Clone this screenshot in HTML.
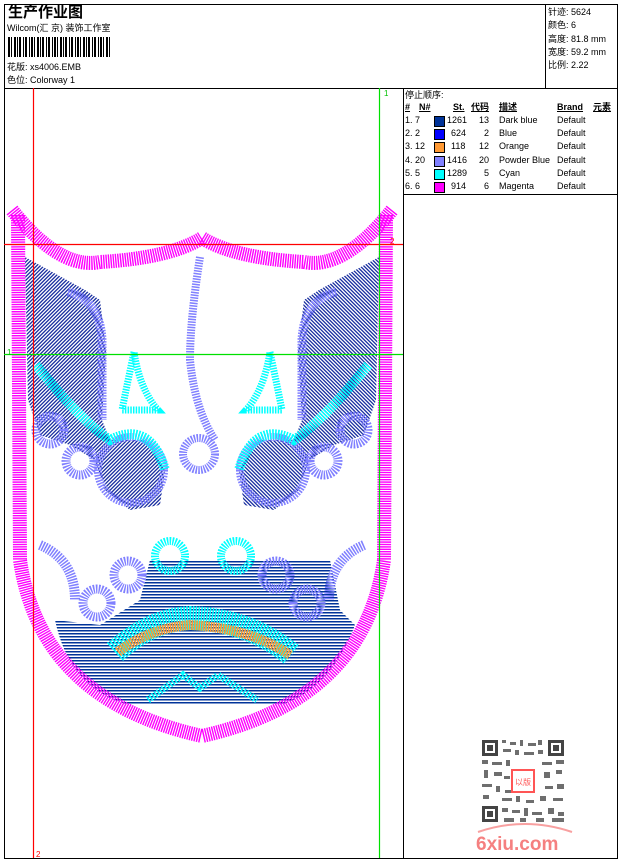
<!DOCTYPE html>
<html><head><meta charset="utf-8"><style>
body{margin:0;width:620px;height:860px;background:#fff;position:relative;overflow:hidden;font-family:"Liberation Sans","Noto Sans CJK SC",sans-serif;font-size:9px;color:#000}
.a{position:absolute;white-space:nowrap;line-height:11px}
</style></head><body>
<svg width="620" height="860" style="position:absolute;left:0;top:0">
<defs>
<pattern id="diag" width="2.6" height="2.6" patternUnits="userSpaceOnUse" patternTransform="rotate(45)"><rect width="1.3" height="2.6" fill="#1a2fa0"/></pattern>
<pattern id="hor" width="4" height="3" patternUnits="userSpaceOnUse"><rect width="4" height="1.5" fill="#003399"/></pattern>
</defs>
<rect x="4.5" y="4.5" width="613" height="854" fill="none" stroke="#000"/>
<line x1="4" y1="88.5" x2="618" y2="88.5" stroke="#000"/>
<line x1="545.5" y1="4" x2="545.5" y2="88" stroke="#000"/>
<line x1="403.5" y1="88" x2="403.5" y2="858" stroke="#000"/>
<line x1="403" y1="194.5" x2="618" y2="194.5" stroke="#000"/>
<g fill="#000">
<rect x="8" y="37" width="2" height="20"/><rect x="11" y="37" width="1" height="20"/><rect x="14" y="37" width="2" height="20"/><rect x="17" y="37" width="1" height="20"/><rect x="19" y="37" width="2" height="20"/><rect x="23" y="37" width="1" height="20"/><rect x="25" y="37" width="2" height="20"/><rect x="29" y="37" width="1" height="20"/><rect x="31" y="37" width="2" height="20"/><rect x="34" y="37" width="1" height="20"/><rect x="37" y="37" width="2" height="20"/><rect x="40" y="37" width="1" height="20"/><rect x="42" y="37" width="2" height="20"/><rect x="46" y="37" width="1" height="20"/><rect x="48" y="37" width="2" height="20"/><rect x="52" y="37" width="1" height="20"/><rect x="54" y="37" width="2" height="20"/><rect x="57" y="37" width="1" height="20"/><rect x="60" y="37" width="2" height="20"/><rect x="63" y="37" width="1" height="20"/><rect x="65" y="37" width="2" height="20"/><rect x="69" y="37" width="1" height="20"/><rect x="71" y="37" width="2" height="20"/><rect x="75" y="37" width="1" height="20"/><rect x="77" y="37" width="2" height="20"/><rect x="80" y="37" width="1" height="20"/><rect x="83" y="37" width="2" height="20"/><rect x="86" y="37" width="1" height="20"/><rect x="88" y="37" width="2" height="20"/><rect x="92" y="37" width="1" height="20"/><rect x="94" y="37" width="2" height="20"/><rect x="98" y="37" width="1" height="20"/><rect x="100" y="37" width="2" height="20"/><rect x="103" y="37" width="1" height="20"/><rect x="106" y="37" width="2" height="20"/><rect x="109" y="37" width="1" height="20"/>
</g>
<!-- mouth first -->
<path d="M150,560 L330,560 L340,610 L355,625 Q330,690 280,705 L130,705 Q70,690 55,620 L100,625 L140,600 Z" fill="url(#hor)"/>
<g id="half">
<path d="M25,257 L85,290 L100,300 L106,350 L102,420 L110,440 L150,440 L165,470 L160,505 L130,510 L105,490 L95,460 L70,445 L40,435 L28,400 Z" fill="url(#diag)"/>
<path d="M68,292 Q100,300 102,340 L102,420" fill="none" stroke="#8080ff" stroke-width="9" stroke-dasharray="1.5 1.2"/>
<circle cx="131" cy="470" r="33" fill="none" stroke="#8080ff" stroke-width="8" stroke-dasharray="1.5 1.2"/>
<circle cx="50" cy="430" r="14" fill="none" stroke="#8080ff" stroke-width="9" stroke-dasharray="1.5 1.2"/>
<circle cx="80" cy="461" r="14" fill="none" stroke="#8080ff" stroke-width="9" stroke-dasharray="1.5 1.2"/>
<path d="M36,365 Q80,420 110,440 Q150,420 165,470" fill="none" stroke="#00ffff" stroke-width="10" stroke-dasharray="1.5 1.2"/>
<path d="M134,352 Q126,390 122,410 L158,410 Q140,390 134,352Z" fill="none" stroke="#00ffff" stroke-width="7" stroke-dasharray="1.5 1.2"/>
<path d="M12,210 Q60,270 100,262 Q170,258 202,238" fill="none" stroke="#ff00ff" stroke-width="14" stroke-dasharray="1.4 1"/>
<path d="M18,215 L20,560 Q40,700 202,736" fill="none" stroke="#ff00ff" stroke-width="14" stroke-dasharray="1.4 1"/>
<path d="M40,545 Q75,560 75,600" fill="none" stroke="#8080ff" stroke-width="10" stroke-dasharray="1.5 1.2"/>
<circle cx="97" cy="603" r="14" fill="none" stroke="#8080ff" stroke-width="9" stroke-dasharray="1.5 1.2"/>
<circle cx="128" cy="575" r="14" fill="none" stroke="#8080ff" stroke-width="9" stroke-dasharray="1.5 1.2"/>
</g>
<use href="#half" transform="translate(404,0) scale(-1,1)"/>
<path d="M200,257 Q190,320 190,360 Q195,410 215,440" fill="none" stroke="#8080ff" stroke-width="8" stroke-dasharray="1.5 1.2"/>
<circle cx="199" cy="454" r="16" fill="none" stroke="#8080ff" stroke-width="8" stroke-dasharray="1.5 1.2"/>
<circle cx="170" cy="556" r="15" fill="none" stroke="#00ffff" stroke-width="8" stroke-dasharray="1.5 1.2"/>
<circle cx="236" cy="556" r="15" fill="none" stroke="#00ffff" stroke-width="8" stroke-dasharray="1.5 1.2"/>
<path d="M115,652 Q150,620 190,618 Q250,620 292,655" fill="none" stroke="#00ffff" stroke-width="24" stroke-dasharray="1.5 1.2"/>
<path d="M118,652 Q150,628 190,625 Q250,628 290,655" fill="none" stroke="#ff9933" stroke-width="10" stroke-dasharray="1.6 0.8"/>
<path d="M148,700 L183,675 L200,688 L218,675 L257,700" fill="none" stroke="#00ffff" stroke-width="7" stroke-dasharray="1.5 1.5"/>
<line x1="33.5" y1="88" x2="33.5" y2="858" stroke="#ff0000" stroke-width="1.2"/>
<line x1="4" y1="244.5" x2="403" y2="244.5" stroke="#ff0000" stroke-width="1.2"/>
<line x1="4" y1="354.5" x2="403" y2="354.5" stroke="#00e000" stroke-width="1.2"/>
<line x1="379.5" y1="88" x2="379.5" y2="858" stroke="#00e000" stroke-width="1.2"/>
<rect x="482" y="740" width="82" height="82" fill="#fff"/>
<g fill="#444">
<rect x="482" y="740" width="16" height="16"/><rect x="548" y="740" width="16" height="16"/><rect x="482" y="806" width="16" height="16"/>
</g>
<g fill="#fff"><rect x="485" y="743" width="10" height="10"/><rect x="551" y="743" width="10" height="10"/><rect x="485" y="809" width="10" height="10"/></g>
<g fill="#444"><rect x="487" y="745" width="6" height="6"/><rect x="553" y="745" width="6" height="6"/><rect x="487" y="811" width="6" height="6"/></g>
<g fill="#555" opacity="0.85">
<rect x="502" y="740" width="4" height="3"/><rect x="510" y="742" width="6" height="3"/><rect x="520" y="740" width="3" height="6"/><rect x="528" y="743" width="8" height="3"/><rect x="538" y="740" width="4" height="5"/>
<rect x="503" y="749" width="8" height="3"/><rect x="515" y="750" width="4" height="5"/><rect x="524" y="752" width="10" height="3"/><rect x="538" y="750" width="5" height="4"/>
<rect x="482" y="760" width="6" height="4"/><rect x="492" y="762" width="10" height="3"/><rect x="506" y="760" width="4" height="6"/><rect x="542" y="762" width="10" height="3"/><rect x="556" y="760" width="8" height="4"/>
<rect x="484" y="770" width="4" height="8"/><rect x="494" y="772" width="8" height="4"/><rect x="504" y="776" width="6" height="3"/><rect x="544" y="772" width="6" height="6"/><rect x="556" y="770" width="6" height="4"/>
<rect x="482" y="784" width="10" height="3"/><rect x="496" y="786" width="4" height="6"/><rect x="505" y="790" width="6" height="3"/><rect x="545" y="786" width="8" height="3"/><rect x="557" y="784" width="7" height="5"/>
<rect x="483" y="795" width="6" height="4"/><rect x="502" y="798" width="10" height="3"/><rect x="516" y="796" width="4" height="6"/><rect x="526" y="800" width="8" height="3"/><rect x="540" y="796" width="6" height="5"/><rect x="553" y="798" width="10" height="3"/>
<rect x="502" y="808" width="6" height="4"/><rect x="512" y="810" width="8" height="3"/><rect x="524" y="808" width="4" height="8"/><rect x="532" y="812" width="10" height="3"/><rect x="548" y="808" width="6" height="6"/><rect x="558" y="812" width="6" height="4"/>
<rect x="504" y="818" width="10" height="4"/><rect x="520" y="818" width="6" height="4"/><rect x="536" y="818" width="8" height="4"/><rect x="552" y="818" width="12" height="4"/>
</g>
<rect x="512" y="770" width="22" height="22" fill="#fff" stroke="#f55" stroke-width="2"/>
<text x="523" y="785" font-size="8" fill="#f55" text-anchor="middle" font-family="Noto Sans CJK SC,sans-serif">以版</text>
<path d="M478,832 Q525,816 572,832" fill="none" stroke="#f8a0a0" stroke-width="2"/>
<text x="476" y="850" font-size="19" font-weight="bold" fill="#f58080" font-family="Liberation Sans,sans-serif">6xiu.com</text>
</svg>
<div class="a" style="left:8px;top:4px;font-size:15px;font-weight:bold;line-height:17px">生产作业图</div>
<div class="a" style="left:7px;top:23px">Wilcom(汇 京) 装饰工作室</div>
<div class="a" style="left:7px;top:62px">花版: xs4006.EMB</div>
<div class="a" style="left:7px;top:75px">色位: Colorway 1</div>
<div class="a" style="left:548px;top:6px;line-height:13.3px">针迹: 5624<br>颜色: 6<br>高度: 81.8 mm<br>宽度: 59.2 mm<br>比例: 2.22</div>
<div class="a" style="left:384px;top:88px;color:#00c000;font-size:8px">1</div>
<div class="a" style="left:390px;top:236px;color:#f00;font-size:8px">2</div>
<div class="a" style="left:36px;top:849px;color:#f00;font-size:8px">2</div>
<div class="a" style="left:7px;top:347px;color:#00c000;font-size:8px">1</div>
<div class="a" style="left:405px;top:90px">停止顺序:</div>
<div class="a" style="left:405px;top:102px;font-weight:bold;text-decoration:underline">#</div>
<div class="a" style="left:419px;top:102px;font-weight:bold;text-decoration:underline">N#</div>
<div class="a" style="left:453px;top:102px;font-weight:bold;text-decoration:underline">St.</div>
<div class="a" style="left:471px;top:102px;font-weight:bold;text-decoration:underline">代码</div>
<div class="a" style="left:499px;top:102px;font-weight:bold;text-decoration:underline">描述</div>
<div class="a" style="left:557px;top:102px;font-weight:bold;text-decoration:underline">Brand</div>
<div class="a" style="left:593px;top:102px;font-weight:bold;text-decoration:underline">元素</div>
<div style="position:absolute;left:405px;top:115px;line-height:13.2px">
<div style="position:relative;height:13.2px"><span class="a" style="left:0">1. 7</span><span class="a" style="left:29px;top:1px;width:9px;height:9px;background:#003399;border:1px solid #000"></span><span class="a" style="left:42px">1261</span><span class="a" style="left:74px">13</span><span class="a" style="left:94px">Dark blue</span><span class="a" style="left:152px">Default</span></div>
<div style="position:relative;height:13.2px"><span class="a" style="left:0">2. 2</span><span class="a" style="left:29px;top:1px;width:9px;height:9px;background:#0000ff;border:1px solid #000"></span><span class="a" style="left:46px">624</span><span class="a" style="left:79px">2</span><span class="a" style="left:94px">Blue</span><span class="a" style="left:152px">Default</span></div>
<div style="position:relative;height:13.2px"><span class="a" style="left:0">3. 12</span><span class="a" style="left:29px;top:1px;width:9px;height:9px;background:#ff9933;border:1px solid #000"></span><span class="a" style="left:46px">118</span><span class="a" style="left:74px">12</span><span class="a" style="left:94px">Orange</span><span class="a" style="left:152px">Default</span></div>
<div style="position:relative;height:13.2px"><span class="a" style="left:0">4. 20</span><span class="a" style="left:29px;top:1px;width:9px;height:9px;background:#8080ff;border:1px solid #000"></span><span class="a" style="left:42px">1416</span><span class="a" style="left:74px">20</span><span class="a" style="left:94px">Powder Blue</span><span class="a" style="left:152px">Default</span></div>
<div style="position:relative;height:13.2px"><span class="a" style="left:0">5. 5</span><span class="a" style="left:29px;top:1px;width:9px;height:9px;background:#00ffff;border:1px solid #000"></span><span class="a" style="left:42px">1289</span><span class="a" style="left:79px">5</span><span class="a" style="left:94px">Cyan</span><span class="a" style="left:152px">Default</span></div>
<div style="position:relative;height:13.2px"><span class="a" style="left:0">6. 6</span><span class="a" style="left:29px;top:1px;width:9px;height:9px;background:#ff00ff;border:1px solid #000"></span><span class="a" style="left:46px">914</span><span class="a" style="left:79px">6</span><span class="a" style="left:94px">Magenta</span><span class="a" style="left:152px">Default</span></div>
</div>
</body></html>
